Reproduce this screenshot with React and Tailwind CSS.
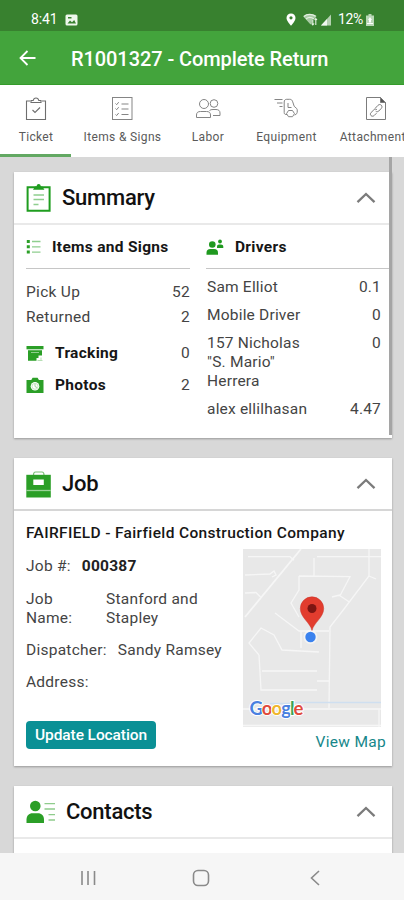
import React, { useState } from 'react';

const TABS = [
  { label: 'Ticket', icon: TicketIcon, cls: 'w-[71px]' },
  { label: 'Items & Signs', icon: ItemsIcon, cls: 'w-[102px]' },
  { label: 'Labor', icon: LaborIcon, cls: 'w-[69px]' },
  { label: 'Equipment', icon: EquipmentIcon, cls: 'w-[88px]' },
  { label: 'Attachments', icon: AttachmentIcon, cls: 'w-[91px]' },
];

const DRIVERS = [
  { name: 'Sam Elliot', value: '0.1' },
  { name: 'Mobile Driver', value: '0' },
  { name: '157 Nicholas "S. Mario" Herrera', value: '0' },
  { name: 'alex ellilhasan', value: '4.47' },
];

function TicketIcon() {
  return (
    <svg width="24" height="26" viewBox="0 0 24 26" fill="none" stroke="#6e6e6e" strokeWidth="1.1">
      <path d="M6 5H2.500v18.500h19V5H18" />
      <path d="M7 6.500h10V4.500h-2.200C14.400 2.600 13.400 2 12 2s-2.400.6-2.800 2.500H7z" />
      <path d="M8.500 14l2.500 2.500 5-5" />
    </svg>
  );
}

function ItemsIcon() {
  return (
    <svg width="24" height="26" viewBox="0 0 24 26" fill="none" stroke="#858585" strokeWidth="1">
      <rect x="2.500" y="1.500" width="19.500" height="22" />
      <path d="M5.500 7.500l1.200 1.200 2-2.500M5.500 12.500l1.200 1.200 2-2.500M5.500 18.500l1.200 1 2-2.500" />
      <path d="M11.500 8h7M11.500 13h7M11.500 18.500h7" />
    </svg>
  );
}

function LaborIcon() {
  return (
    <svg width="26" height="26" viewBox="0 0 26 26" fill="none" stroke="#858585" strokeWidth="1">
      <circle cx="9" cy="8" r="4.500" />
      <circle cx="19" cy="7.500" r="3.800" />
      <path d="M1.500 21.500v-2.500c0-2.500 1.500-3.500 4-3.500h6c2.500 0 4 1 4 3.500v2.500z" />
      <path d="M14.500 14.500c1-.8 2-1 3.500-1h3c2.500 0 4 1.200 4 3.500v2.500h-7" />
    </svg>
  );
}

function EquipmentIcon() {
  return (
    <svg width="26" height="26" viewBox="0 0 26 26" fill="none" stroke="#858585" strokeWidth="1">
      <path d="M1.500 3.500h8M4 7h5.500M6.500 10.500h3" />
      <path d="M14 18.500h-1c-1.200 0-1.800-.7-1.800-2V6c0-1.700.9-2.700 2.500-2.700h3c1.600 0 2.500.8 3 2.500l1.500 4.500 2.500 2.200c.8.800.8 4 0 5.200l-2 1.500" />
      <path d="M15 7v4.500h3.500" />
      <path d="M15.500 14.500h4l2 3.200-2 3h-4l-2-3z" />
    </svg>
  );
}

function AttachmentIcon() {
  return (
    <svg width="24" height="26" viewBox="0 0 24 26" fill="none" stroke="#7c7c7c" strokeWidth="1">
      <path d="M16.500 1.500H2.500v22h19V6.500z" />
      <path d="M16.500 1.500v5h5z" fill="#555" />
      <path d="M11 12.500l3-3.200c1-1 2.500-1 3.300-.1.900.9.900 2.200 0 3.200l-2.500 2.600c-.9.900-2.200 1-3.100.2" />
      <path d="M13 13.800c-.9-.9-2.300-.8-3.200.1l-2.700 2.600c-1 1-.9 2.300-.1 3.100.9.900 2.300.8 3.200-.1l2.300-2.300" />
    </svg>
  );
}

function SummaryIcon() {
  return (
    <svg width="26" height="30" viewBox="0 0 26 30" fill="none">
      <path d="M1.600 4.200h22v23.600h-22z" stroke="#1f9d1f" strokeWidth="2" />
      <path d="M7 6.800l2-3.300h1.500C10.800 1.800 11.500 1 12.700 1s1.900.8 2.200 2.500h1.500l2 3.300z" fill="#1f9d1f" />
      <path d="M7.500 12h10.500M7.500 16.500h10.500M7.500 21.500h5" stroke="#8fce8f" strokeWidth="1.300" />
    </svg>
  );
}

function JobIcon() {
  return (
    <svg width="26" height="28" viewBox="0 0 26 28">
      <path d="M7.500 5c0-2.200.8-3 2-3h6.500c1.200 0 2 .8 2 3" fill="none" stroke="#7cc279" strokeWidth="1.200" />
      <path d="M.3 4.800h24.500v22.700H.3z" fill="#2b9f27" />
      <path d="M7.300 9.500h10.500v5.500H7.300z" fill="#fff" />
      <path d="M.3 20.500h24.500" stroke="#9bd398" strokeWidth="1.300" />
    </svg>
  );
}

function ContactsIcon() {
  return (
    <svg width="30" height="26" viewBox="0 0 30 26">
      <circle cx="9.300" cy="7" r="5.300" fill="#2b9f27" />
      <path d="M.5 24v-3.500c0-4 2.500-6.300 6-6.300h5.500c3.500 0 6 2.300 6 6.300V24z" fill="#2b9f27" />
      <path d="M18.500 4.700H29M18.500 10H29M22.500 15.700H29M22.500 21H29" stroke="#8fcc8c" strokeWidth="1.300" />
    </svg>
  );
}

function ListIcon() {
  return (
    <svg width="16" height="16" viewBox="0 0 16 16">
      <path d="M.8 1h3v3h-3zM.8 6.300h3v3h-3zM.8 11.600h3v3h-3z" fill="#2b9f27" />
      <path d="M6 2.500h8.500M6 7.800h8.500M6 13.100h8.500" stroke="#8fce8f" strokeWidth="1.300" />
    </svg>
  );
}

function DriversIcon() {
  return (
    <svg width="18" height="17" viewBox="0 0 18 17" fill="#1f991f">
      <circle cx="6.300" cy="5.500" r="3.300" />
      <path d="M.5 15.700v-2c0-2.400 1.400-3.700 3.800-3.700h3.900c2.400 0 3.800 1.300 3.800 3.700v2z" />
      <circle cx="14" cy="2.500" r="1.900" />
      <path d="M11 9V7.700c0-1.500.8-2.300 2-2.300h2c1.300 0 2.300.8 2.300 2.300V9z" />
    </svg>
  );
}

function TrackingIcon() {
  return (
    <svg width="18" height="17" viewBox="0 0 18 17">
      <path d="M.5 1h17v3.300H.5z" fill="#2b9f27" />
      <path d="M2 5.300h14v5.200h-3.500v2.500h-2v2.800H2z" fill="#2b9f27" />
      <path d="M5 7.500h8" stroke="#8fce8f" />
      <path d="M11.500 15.500h5M15 12.500v3" stroke="#b7dfb5" />
    </svg>
  );
}

function CameraIcon() {
  return (
    <svg width="18" height="17" viewBox="0 0 18 17">
      <path d="M.5 3h4.800L6.600.8h5L12.900 3h4.600v13H.5z" fill="#2b9f27" />
      <circle cx="9" cy="9.300" r="4.300" fill="#fff" />
      <circle cx="9" cy="9.300" r="3" fill="none" stroke="#b7dfb5" strokeWidth=".8" />
      <path d="M9 7v2.500l2 1" fill="none" stroke="#9bd398" />
    </svg>
  );
}

function Chevron({ open }) {
  return (
    <svg className={open ? '' : 'rotate-180'} width="20" height="12" viewBox="0 0 20 12" fill="none" stroke="#7b7b7b" strokeWidth="2.300">
      <path d="M1.500 10.200L10 2l8.500 8.200" />
    </svg>
  );
}

function Card({ icon, title, divider, className, children }) {
  const [open, setOpen] = useState(true);

  return (
    <section className={`bg-white shrink-0 shadow-[0_1px_2px_rgba(0,0,0,0.3)] ${className}`}>
      <button
        onClick={() => setOpen(!open)}
        className={`flex items-center w-full h-[53px] pl-3 pr-4 border-b-2 ${divider}`}
      >
        {icon}
        <h2 className="ml-[10px] text-[22px] font-medium tracking-[-0.25px] text-[#111]">{title}</h2>
        <span className="ml-auto"><Chevron open={open} /></span>
      </button>
      {open && children}
    </section>
  );
}

function StatusBar() {
  return (
    <div className="flex items-center h-[31px] shrink-0 bg-[#38812f] text-white pl-[31px] pt-2 text-[14px]">
      <span className="w-[27px] tracking-[-0.1px]">8:41</span>
      <svg className="ml-[7px]" width="13" height="12" viewBox="0 0 13 12">
        <rect x=".5" y=".5" width="12" height="11" rx="1.500" fill="#eef7ec" />
        <path d="M2.500 9.500l2.500-3 2 1.800L9.200 6l1.800 3.500z" fill="#38812f" />
        <path d="M3 3h3.500v1.500H3z" fill="#38812f" />
      </svg>
      <svg className="ml-[208px]" width="10" height="13" viewBox="0 0 10 13">
        <path d="M5 .5C2.300.5.500 2.500.500 5c0 3 4.500 7.700 4.500 7.700S9.500 8 9.500 5C9.500 2.500 7.700.5 5 .5z" fill="#fff" />
        <circle cx="5" cy="4.800" r="1.600" fill="#38812f" />
      </svg>
      <svg className="ml-[7px]" width="15" height="13" viewBox="0 0 15 13">
        <path d="M.3 3.500C4 .3 9.500.3 13.500 3L12 5.500 9.500 6v3L7.500 11.500z" fill="#a9cba5" />
        <path d="M.8 3.500C4 .8 9 .8 12.500 3.200M3 6c2.500-2 5.500-1.800 8 0" fill="none" stroke="#e3f0e1" strokeWidth="1.200" />
        <path d="M9.800 6.500v5.500M8.500 10.500L9.800 12l1.300-1.500M12.800 12V5.500M11.500 7l1.300-1.500L14 7" fill="none" stroke="#e3f0e1" strokeWidth="1.100" />
      </svg>
      <svg className="ml-[3px]" width="10" height="12" viewBox="0 0 10 12">
        <path d="M0 11.500L10 .5v11z" fill="#b5d1b1" />
        <path d="M0 11.500l6-6.500v6.500z" fill="#f0f7ef" />
      </svg>
      <span className="ml-[7px] w-[27px] tracking-[-0.4px]">12%</span>
      <svg className="ml-[1px]" width="8" height="12" viewBox="0 0 8 12">
        <path d="M2.500 0h3v1.500H8v10.500H0V1.500h2.500z" fill="#b9d6b5" />
        <path d="M4 3l2 3H5v2.500H3V6H2z" fill="#fff" />
        <path d="M1 9.500h6" stroke="#fff" />
      </svg>
    </div>
  );
}

function SubHeading({ icon, children }) {
  return (
    <div className="flex items-center h-[44px] pt-px border-b border-[#c6c6c6] font-bold tracking-[0.3px] text-[#161616]">
      {icon}
      {children}
    </div>
  );
}

function SiteMap() {
  return (
    <svg className="block" width="138" height="178" viewBox="0 0 138 178">
      <rect width="138" height="178" fill="#e8e8e8" />
      <g fill="none" stroke="#f6f6f6" strokeWidth="1.300">
        <path d="M5 7.700h42l4 3.500M74 7.700h64M71 9v18M2 26l25-1 4-3 2 4-4 2M2 44l11-.5 5 5" />
        <path d="M58 0L2 68" strokeWidth="1.800" />
        <path d="M56 27l51 .7-10 19 9 6M56 27v14l-8 13 8 14M126 0v27l-25 33-14 18-1 81M126 27l7 3M97 46l-8 2" />
        <path d="M32 64l24 18h30M58 82v17" />
        <path d="M16 106L6 94l12-15 13 7 8 15 37 2M16 106l2 35h56M19 122h55M74 132h12" />
        <path d="M0 160h138M136 160v18M0 176.500h138" />
      </g>
      <path d="M27 154.500h18l8-1h85" stroke="#cfdff0" strokeWidth="1.300" fill="none" />
      <circle cx="67.500" cy="88" r="7" fill="#fff" opacity=".5" />
      <circle cx="67.500" cy="88" r="5.200" fill="#3b82ee" />
      <path d="M69 81.500C67.500 74 57.300 68.500 57.300 59.500a11.700 11.700 0 0 1 23.400 0C80.700 68.500 70.500 74 69 81.500z" fill="#e23c2e" stroke="#c9352a" strokeWidth=".5" />
      <circle cx="69" cy="59.500" r="4.500" fill="#7d1512" />
      <text x="6.500" y="166" fontFamily="Lato, sans-serif" fontSize="18.500" fontWeight="700" textLength="54" stroke="#fff" strokeWidth="2" paintOrder="stroke">
        <tspan fill="#4a80e0">G</tspan>
        <tspan fill="#e04a3c">o</tspan>
        <tspan fill="#efb62c">o</tspan>
        <tspan fill="#4a80e0">g</tspan>
        <tspan fill="#3ba455">l</tspan>
        <tspan fill="#e04a3c">e</tspan>
      </text>
    </svg>
  );
}

export default function App() {
  const [activeTab, setActiveTab] = useState('Ticket');

  return (
    <div className="flex flex-col w-[404px] h-[900px] overflow-hidden bg-[#d8d8d8] font-[Roboto,sans-serif] text-[#444]">
      <StatusBar />

      {/* App bar */}
      <header className="flex items-center h-[54px] shrink-0 bg-[#43a43c] border-b border-[#349b2a] pl-[19px] text-white">
        <svg width="17" height="16" viewBox="0 0 17 16" fill="none" stroke="#fff" strokeWidth="1.800">
          <path d="M16.500 8H1.800M8.500 1L1.500 8l7 7" />
        </svg>
        <h1 className="ml-[35px] pt-0.5 text-[20px] font-medium tracking-[-0.08px] whitespace-nowrap">R1001327 - Complete Return</h1>
      </header>

      {/* Tabs */}
      <nav className="flex h-[72px] shrink-0 bg-white">
        {TABS.map(({ label, icon: Icon, cls }) => (
          <button
            key={label}
            onClick={() => setActiveTab(label)}
            className={`flex flex-col items-center shrink-0 pt-[11px] border-b-3 ${cls} ${
              activeTab === label ? 'border-[#62a862]' : 'border-transparent'
            }`}
          >
            <Icon />
            <span className="mt-1.5 pl-px text-[12px] leading-[18px] tracking-[0.35px] whitespace-nowrap text-[#5a5a5a]">{label}</span>
          </button>
        ))}
      </nav>

      <main className="relative flex flex-col flex-1 min-h-0 gap-5 pt-[15px] pl-[14px] pr-3 overflow-hidden text-[15.500px] leading-[19px]">
        <Card icon={<SummaryIcon />} title="Summary" divider="border-[#e9e9e9]" className="h-[266px]">
          <div className="flex gap-4 pl-3">
            <div className="w-[164px] tracking-[0.3px]">
              <SubHeading icon={<span className="w-[26px]"><ListIcon /></span>}>Items and Signs</SubHeading>
              <div className="flex justify-between mt-[14px]"><span>Pick Up</span><span>52</span></div>
              <div className="flex justify-between mt-1.5"><span>Returned</span><span>2</span></div>
              <div className="flex items-center mt-[17px]">
                <TrackingIcon />
                <span className="ml-[11px] font-bold text-[#161616]">Tracking</span>
                <span className="ml-auto">0</span>
              </div>
              <div className="flex items-center mt-[13px]">
                <CameraIcon />
                <span className="ml-[11px] font-bold text-[#161616]">Photos</span>
                <span className="ml-auto">2</span>
              </div>
            </div>
            <div className="flex-1 tracking-[0.2px]">
              <SubHeading icon={<span className="w-[29px]"><DriversIcon /></span>}>Drivers</SubHeading>
              <div className="flex flex-col gap-[9px] mt-[9px] pl-px pr-[11px]">
                {DRIVERS.map((d) => (
                  <div key={d.name} className="flex justify-between">
                    <span className="max-w-[108px]">{d.name}</span>
                    <span>{d.value}</span>
                  </div>
                ))}
              </div>
            </div>
          </div>
        </Card>

        <Card icon={<JobIcon />} title="Job" divider="border-[#d6d6d6]" className="h-[308px]">
          <div className="pl-3 pr-[7px] pt-[13px]">
            <div className="font-medium tracking-[0.35px] text-[#161616] whitespace-nowrap">FAIRFIELD - Fairfield Construction Company</div>
            <div className="flex justify-between mt-[5px]">
              <div className="pt-[9px] tracking-[0.25px] whitespace-nowrap">
                <div>Job #:<b className="ml-[11px] text-[#222]">000387</b></div>
                <div className="flex mt-[14px]">
                  <span className="w-20">Job<br />Name:</span>
                  <span>Stanford and<br />Stapley</span>
                </div>
                <div className="mt-[13px]">Dispatcher:<span className="ml-[11px]">Sandy Ramsey</span></div>
                <div className="mt-[13px]">Address:</div>
                <button className="w-[130px] h-[28px] mt-[29px] rounded-[4px] bg-[#0a9095] text-white font-medium tracking-[-0.1px]">Update Location</button>
              </div>
              <div className="flex flex-col mr-1 mt-px">
                <SiteMap />
                <a className="self-end mt-1.5 -mr-[5px] text-[#16878a] tracking-[0.3px]">View Map</a>
              </div>
            </div>
          </div>
        </Card>

        <Card icon={<ContactsIcon />} title="Contacts" divider="border-[#e9e9e9]" className="h-[120px]" />

        {/* Scroll indicator */}
        <div className="absolute top-0 right-3 w-[3px] h-[278px] bg-[#a5a5a5]" />
      </main>

      {/* System navigation */}
      <footer className="flex items-center justify-between h-[47px] shrink-0 bg-[#f6f6f6] pl-[80px] pr-[84px] pt-0.5">
        <svg width="17" height="16" viewBox="0 0 17 16" stroke="#8a8a8a" strokeWidth="1.600">
          <path d="M2 1v14M8 1v14M14.500 1v14" />
        </svg>
        <svg className="-ml-[5px]" width="18" height="18" viewBox="0 0 18 18" fill="none" stroke="#8a8a8a" strokeWidth="1.600">
          <rect x="1.500" y="1.500" width="15" height="15" rx="4.500" />
        </svg>
        <svg width="10" height="16" viewBox="0 0 10 16" fill="none" stroke="#8a8a8a" strokeWidth="1.600">
          <path d="M9 1L1.500 8 9 15" />
        </svg>
      </footer>
    </div>
  );
}
